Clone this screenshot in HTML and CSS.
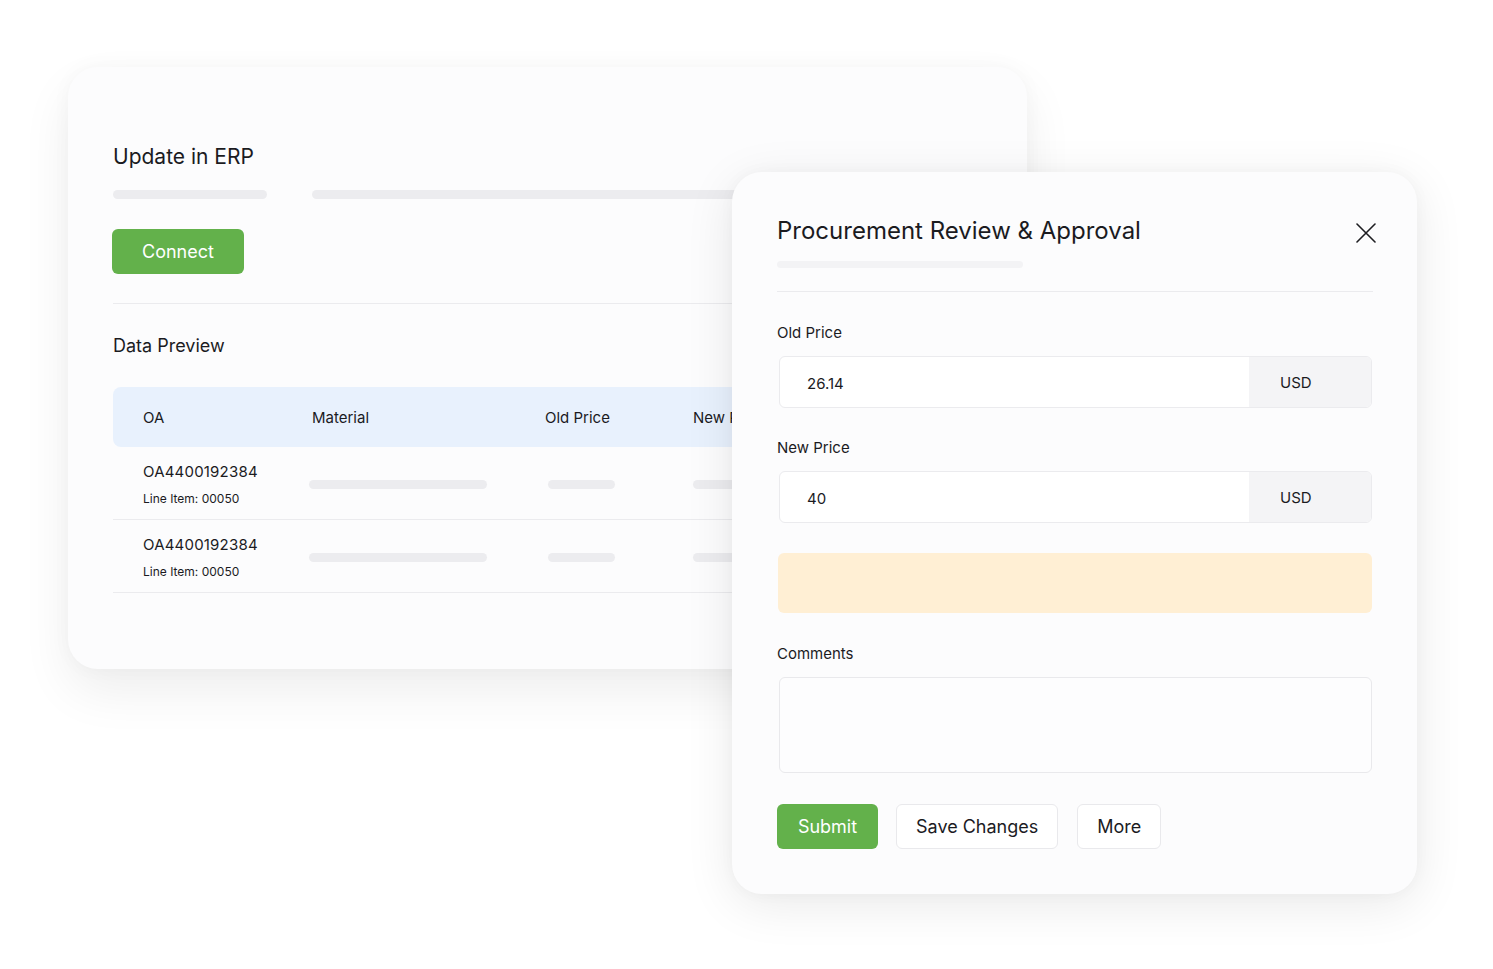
FILE: index.html
```html
<!DOCTYPE html>
<html lang="en">
<head>
    <meta charset="UTF-8">
    <meta name="viewport" content="width=device-width, initial-scale=1.0">
    <title>Procurement Review</title>
    <link rel="stylesheet" href="styles.css">
</head>
<body>

<div class="stage">
    <div class="card erp-card">
        <h2 class="card-title">Update in ERP</h2>
        <div class="skeleton-row">
            <span class="bar bar-short"></span>
            <span class="bar bar-long"></span>
        </div>
        <button class="btn btn-green connect-btn">Connect</button>
        <hr class="divider">
        <h3 class="section-title">Data Preview</h3>

        <div class="table">
            <div class="table-head">
                <div class="cell first">OA</div>
                <div class="cell">Material</div>
                <div class="cell">Old Price</div>
                <div class="cell">New Price</div>
            </div>
            <div class="table-row">
                <div class="cell first">
                    <div class="oa-id">OA4400192384</div>
                    <div class="line-item">Line Item: 00050</div>
                </div>
                <div class="cell"><span class="bar bar-material"></span></div>
                <div class="cell"><span class="bar bar-price"></span></div>
                <div class="cell"><span class="bar bar-new"></span></div>
            </div>
            <div class="table-row">
                <div class="cell first">
                    <div class="oa-id">OA4400192384</div>
                    <div class="line-item">Line Item: 00050</div>
                </div>
                <div class="cell"><span class="bar bar-material"></span></div>
                <div class="cell"><span class="bar bar-price"></span></div>
                <div class="cell"><span class="bar bar-new"></span></div>
            </div>
        </div>
    </div>

    <div class="card review-card">
        <div class="review-header">
            <h2 class="review-title">Procurement Review &amp; Approval</h2>
            <button class="close-btn" aria-label="Close">
                <svg width="20" height="20" viewBox="0 0 20 20">
                    <path d="M1 1 L19 19 M19 1 L1 19" stroke="#1d1d21" stroke-width="1.6" stroke-linecap="round" fill="none"/>
                </svg>
            </button>
        </div>
        <span class="bar bar-subtitle"></span>
        <hr class="divider review-divider">

        <label class="field-label first-label">Old Price</label>
        <div class="price-input">
            <span class="price-value">26.14</span>
            <span class="currency">USD</span>
        </div>

        <label class="field-label">New Price</label>
        <div class="price-input">
            <span class="price-value">40</span>
            <span class="currency">USD</span>
        </div>

        <div class="notice"></div>

        <label class="field-label comments-label">Comments</label>
        <div class="comments"></div>

        <div class="actions">
            <button class="btn btn-green">Submit</button>
            <button class="btn btn-outline">Save Changes</button>
            <button class="btn btn-outline">More</button>
        </div>
    </div>
</div>

</body>
</html>
```

FILE: styles.css
```css
* {
    box-sizing: border-box;
}

body {
    margin: 0;
    background: #ffffff;
    font-family: 'Inter', 'Open Sans', sans-serif;
    color: #1b1b1f;
    overflow: hidden;
}

.stage {
    position: relative;
    width: 1493px;
    height: 969px;
}

.card {
    position: absolute;
    background: #fcfcfd;
    border-radius: 30px;
}

.erp-card {
    left: 68px;
    top: 67px;
    width: 959px;
    height: 602px;
    padding: 77px 45px 0 45px;
    box-shadow: 0 22px 50px rgba(0, 0, 0, 0.07), 0 0 20px rgba(0, 0, 0, 0.03);
    overflow: hidden;
}

.review-card {
    left: 732px;
    top: 172px;
    width: 685px;
    height: 722px;
    padding: 44px 44px 0 45px;
    box-shadow: 0 10px 50px rgba(0, 0, 0, 0.09), 0 0 16px rgba(0, 0, 0, 0.03);
}

.card-title {
    margin: 0;
    font-size: 21px;
    line-height: 25px;
    font-weight: 400;
}

.bar {
    display: block;
    height: 9px;
    border-radius: 5px;
    background: #ececef;
}

.skeleton-row {
    display: flex;
    gap: 45px;
    margin-top: 21px;
}

.bar-short {
    width: 154px;
}

.bar-long {
    width: 560px;
}

.btn {
    height: 45px;
    padding: 0 19px;
    border-radius: 6px;
    font-family: inherit;
    font-size: 18px;
    cursor: pointer;
}

.btn-green {
    background: #63b14b;
    color: #ffffff;
    border: none;
}

.btn-outline {
    background: #ffffff;
    color: #1b1b1f;
    border: 1px solid #e9e9ec;
}

.connect-btn {
    display: block;
    margin-top: 30px;
    margin-left: -1px;
    width: 132px;
    padding: 0;
}

.divider {
    margin: 29px 0 0;
    border: none;
    border-top: 1px solid #ebebee;
}

.section-title {
    margin: 31px 0 0;
    font-size: 18px;
    line-height: 22px;
    font-weight: 400;
}

/* data preview table */
.table {
    margin-top: 30px;
}

.table-head,
.table-row {
    display: grid;
    grid-template-columns: 199px 233px 148px 1fr;
    align-items: center;
}

.table-head {
    height: 60px;
    background: #e8f1fd;
    border-radius: 8px 0 0 8px;
    font-size: 15px;
}

.table-row {
    height: 73px;
    border-bottom: 1px solid #ebebee;
}

.cell.first {
    padding-left: 30px;
}

.table-row .cell {
    padding-top: 2px;
}

.oa-id {
    font-size: 15px;
    line-height: 18px;
    letter-spacing: 0.2px;
}

.line-item {
    margin-top: 10px;
    font-size: 12px;
    line-height: 15px;
}

.bar-material {
    width: 178px;
    margin-left: -3px;
}

.bar-price {
    width: 67px;
    margin-left: 3px;
}

.bar-new {
    width: 67px;
}

/* review card */
.review-header {
    display: flex;
    align-items: center;
    justify-content: space-between;
}

.review-title {
    margin: 0;
    font-size: 24px;
    line-height: 30px;
    font-weight: 400;
}

.close-btn {
    background: none;
    border: none;
    padding: 0;
    width: 20px;
    height: 20px;
    margin-right: -3px;
    margin-top: 3px;
}

.bar-subtitle {
    width: 246px;
    height: 7px;
    margin-top: 15px;
    background: #f3f3f5;
}

.review-divider {
    margin-top: 23px;
}

.field-label {
    display: block;
    margin-top: 31px;
    font-size: 15px;
    line-height: 18px;
}

.field-label.first-label {
    margin-top: 32px;
}

.price-input {
    display: flex;
    height: 52px;
    margin: 14px 1px 0 2px;
    border: 1px solid #ebebee;
    border-radius: 6px;
    background: #ffffff;
    overflow: hidden;
    font-size: 15px;
}

.price-value {
    flex: 1;
    display: flex;
    align-items: center;
    padding-left: 27px;
    padding-top: 3px;
}

.currency {
    width: 122px;
    display: flex;
    align-items: center;
    padding-left: 31px;
    background: #f4f4f6;
}

.notice {
    height: 60px;
    margin: 30px 1px 0 1px;
    background: #ffefd4;
    border-radius: 6px;
}

.comments-label {
    margin-top: 32px;
}

.comments {
    height: 96px;
    margin: 14px 1px 0 2px;
    border: 1px solid #e9e9ec;
    border-radius: 6px;
    background: #fdfdfe;
}

.actions {
    display: flex;
    gap: 18px;
    margin-top: 31px;
}

.actions .btn-green {
    width: 101px;
    padding: 0;
}

.actions .btn-outline + .btn-outline {
    margin-left: 1px;
}
```
